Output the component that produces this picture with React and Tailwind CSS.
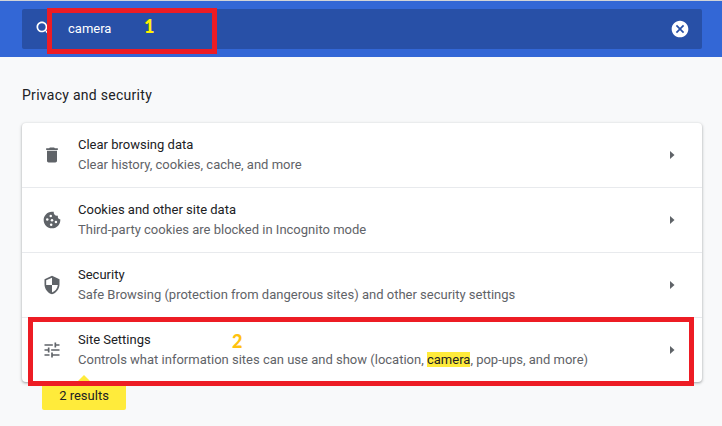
import React from "react";

const ICONS = {
  trash: "M6 19c0 1.100.9 2 2 2h8c1.100 0 2-.9 2-2V7H6v12zM19 4h-3.500l-1-1h-5l-1 1H5v2h14V4z",
  shield:
    "M12 1 3 5v6c0 5.550 3.840 10.740 9 12 5.160-1.260 9-6.450 9-12V5l-9-4zm0 10.990h7c-.53 4.120-3.280 7.790-7 8.940V12H5V6.300l7-3.110v8.800z",
  tune: "M3 17v2h6v-2H3zM3 5v2h10V5H3zm10 16v-2h8v-2h-8v-2h-2v6h2zM7 9v2H3v2h4v2h2V9H7zm14 4v-2H11v2h10zm-6-4h2V7h4V5h-4V3h-2v6z",
  search:
    "M15.500 14h-.79l-.28-.27C15.410 12.590 16 11.110 16 9.500 16 5.910 13.090 3 9.500 3S3 5.910 3 9.500 5.910 16 9.500 16c1.610 0 3.090-.59 4.230-1.570l.27.28v.79l5 4.990L20.490 19l-4.990-5zm-6 0C7.010 14 5 11.990 5 9.500S7.010 5 9.500 5 14 7.010 14 9.500 11.990 14 9.500 14z",
  cancel:
    "M12 2C6.470 2 2 6.470 2 12s4.470 10 10 10 10-4.470 10-10S17.530 2 12 2zm5 13.590L15.590 17 12 13.410 8.410 17 7 15.590 10.590 12 7 8.410 8.410 7 12 10.590 15.590 7 17 8.410 13.410 12 17 15.590z",
};

function Icon({ name, className }) {
  return (
    <svg viewBox="0 0 24 24" fill="currentColor" className={className}>
      <path d={ICONS[name]} />
    </svg>
  );
}

function CookieIcon({ className }) {
  return (
    <svg viewBox="0 0 24 24" className={className}>
      <path
        fill="currentColor"
        d="M21.950 10.990c-1.790-.03-3.700-1.950-2.680-4.220-2.980 1-5.770-1.590-5.190-4.560C6.950.71 2 6.580 2 12c0 5.520 4.480 10 10 10 5.890 0 10.540-5.080 9.950-11.010z"
      />
      <g fill="white">
        <circle cx="10.500" cy="7.300" r="1.500" />
        <circle cx="6.300" cy="11.300" r="1.500" />
        <circle cx="12" cy="12.300" r="1.500" />
        <circle cx="16.700" cy="14.500" r="1.500" />
        <circle cx="11" cy="17.700" r="1.500" />
      </g>
    </svg>
  );
}

function Row({ icon, title, children, last }) {
  return (
    <div className={last ? "flex h-16 items-center pl-5 pr-6" : "flex h-[65px] items-center border-b border-[#e8eaed] pl-5 pr-6"}>
      {icon === "cookie" ? (
        <CookieIcon className="size-5 shrink-0 text-[#5f6368]" />
      ) : (
        <Icon name={icon} className="size-5 shrink-0 text-[#5f6368]" />
      )}
      <div className="ml-4 flex-1 whitespace-nowrap leading-5">
        <div className="text-[#202124]">{title}</div>
        <div className="text-[#5f6368]">{children}</div>
      </div>
      <svg viewBox="0 0 5 8" className="mr-[3px] h-2 w-[5px] fill-[#5f6368]">
        <path d="M0 0 4.500 4 0 8z" />
      </svg>
    </div>
  );
}

export default function App() {
  return (
    <div className="relative h-[426px] w-[722px] overflow-hidden bg-[#f8f9fa] font-['Roboto',sans-serif] text-[13px] text-[#202124]">
      <header className="h-[57px] border-t border-[#d2d4d8] bg-[#3367d6] px-[22px] pt-2 pr-5">
        <div className="flex h-10 items-center rounded-[2px] bg-[#2850a7] pl-3 pr-3 text-white">
          <Icon name="search" className="mb-px size-5" />
          <span className="ml-3.5 flex-1">camera</span>
          <Icon name="cancel" className="size-5" />
        </div>
      </header>
      <main className="pl-[22px] pr-5">
        <h2 className="pt-[28px] text-[14px] leading-5 tracking-[0.28px]">Privacy and security</h2>
        <section className="mt-[18px] h-[259px] rounded-[4px] bg-white shadow-[0_1px_2px_0_rgba(60,64,67,0.3),0_1px_3px_1px_rgba(60,64,67,0.15)]">
          <Row icon="trash" title="Clear browsing data">Clear history, cookies, cache, and more</Row>
          <Row icon="cookie" title="Cookies and other site data">Third-party cookies are blocked in Incognito mode</Row>
          <Row icon="shield" title="Security">Safe Browsing (protection from dangerous sites) and other security settings</Row>
          <Row icon="tune" title="Site Settings" last>
            Controls what information sites can use and show (location,{" "}
            <span className="bg-[#ffeb3b] text-[#202124]">camera</span>, pop-ups, and more)
          </Row>
        </section>
      </main>
      <div className="absolute left-[42px] top-[375px] flex w-[84px] flex-col items-center">
        <svg viewBox="0 0 14 7" className="h-[7px] w-[14px] fill-[#ffeb3b]">
          <path d="M0 7 7 0l7 7z" />
        </svg>
        <div className="flex h-7 w-full items-center justify-center rounded-[2px] bg-[#ffeb3b]">2 results</div>
      </div>
      <div className="absolute left-[47px] top-2 h-[46px] w-[170px] border-[5px] border-[#ed1c24]" />
      <div className="absolute left-[28px] top-[317px] h-[69px] w-[666px] border-[5px] border-[#ed1c24]" />
      <span className="absolute left-[144px] top-[14px] font-['Lato',sans-serif] text-[18px] font-black leading-6 text-[#fff200]">1</span>
      <span className="absolute left-[232px] top-[329px] font-['Lato',sans-serif] text-[18px] font-black leading-6 text-[#ffc20e]">2</span>
    </div>
  );
}
